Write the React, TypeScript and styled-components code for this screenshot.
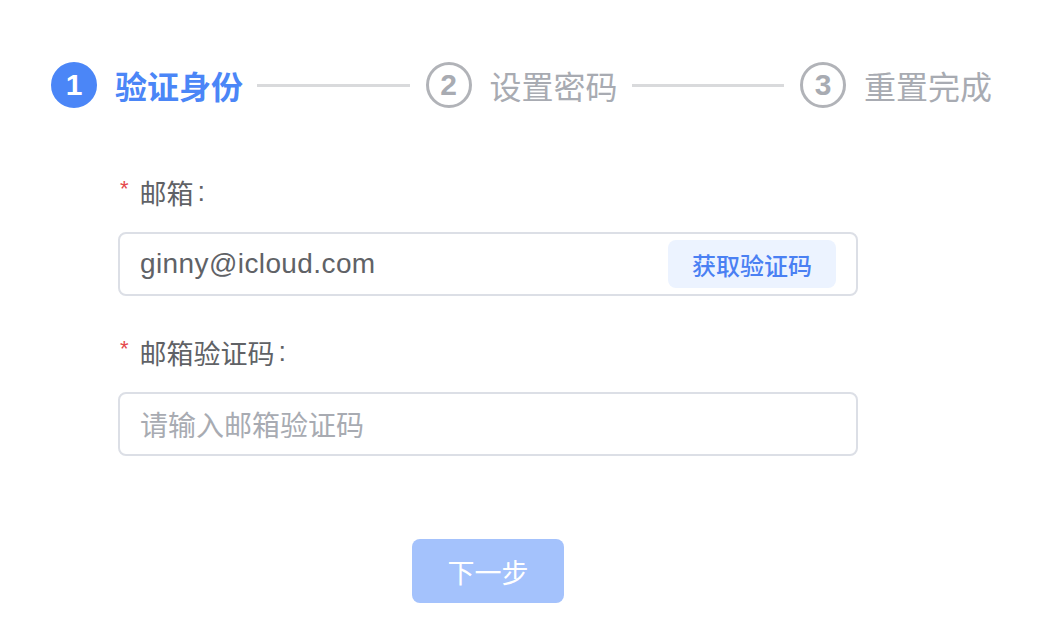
import React from "react";
import styled, { createGlobalStyle } from "styled-components";

const Global = createGlobalStyle`
  html, body { margin: 0; padding: 0; background: #ffffff; }
  body { font-family: "Liberation Sans", "Noto Sans CJK SC", sans-serif; }
  * { box-sizing: border-box; }
`;

const Page = styled.div`
  width: 1048px;
  height: 634px;
  padding-top: 62px;
  background: #ffffff;
`;

const Steps = styled.div`
  display: flex;
  align-items: center;
  width: 941px;
  margin-left: 51px;
`;

const Circle = styled.div<{ $active?: boolean }>`
  flex: none;
  width: 46px;
  height: 46px;
  border-radius: 50%;
  display: flex;
  align-items: center;
  justify-content: center;
  font-family: "Liberation Sans", sans-serif;
  font-weight: 700;
  font-size: 30px;
  line-height: 1;
  color: ${(p) => (p.$active ? "#ffffff" : "#a8abb2")};
  background: ${(p) => (p.$active ? "#4b86f7" : "#ffffff")};
  border: 3px solid ${(p) => (p.$active ? "#4b86f7" : "#b1b3b8")};
`;

const StepTitle = styled.div<{ $active?: boolean }>`
  flex: none;
  margin-left: 18px;
  font-family: "Noto Sans CJK SC", sans-serif;
  font-size: 32px;
  line-height: 46px;
  font-weight: ${(p) => (p.$active ? 700 : 400)};
  color: ${(p) => (p.$active ? "#4b86f7" : "#a8abb2")};
`;

const Line = styled.div`
  flex: 1;
  height: 3px;
  margin: 0 16px 0 14px;
  background: #d9dadc;
`;

const Form = styled.div`
  width: 740px;
  margin-left: 118px;
  margin-top: 64px;
  display: flex;
  flex-direction: column;
`;

const Item = styled.div`
  margin-bottom: 36px;
`;

const Label = styled.div`
  display: flex;
  align-items: center;
  height: 40px;
  margin-bottom: 20px;
  font-family: "Noto Sans CJK SC", sans-serif;
  font-size: 27px;
  color: #606266;
`;

const Star = styled.span`
  color: #e5484d;
  font-family: "Liberation Sans", sans-serif;
  font-size: 22px;
  margin-left: 2px;
  margin-right: 11px;
  position: relative;
  top: -3px;
`;

const Colon = styled.span`
  font-family: "Liberation Sans", sans-serif;
  margin-left: 4px;
`;

const InputBox = styled.div`
  height: 64px;
  border: 2px solid #dcdfe6;
  border-radius: 8px;
  display: flex;
  align-items: center;
  padding: 0 20px;
`;

const Value = styled.div<{ $placeholder?: boolean }>`
  flex: 1;
  font-family: ${(p) =>
    p.$placeholder ? `"Noto Sans CJK SC", sans-serif` : `"Liberation Sans", "Noto Sans CJK SC", sans-serif`};
  font-size: 28px;
  letter-spacing: ${(p) => (p.$placeholder ? "0" : "0.4px")};
  color: ${(p) => (p.$placeholder ? "#a8abb2" : "#606266")};
`;

const CodeButton = styled.div`
  flex: none;
  height: 48px;
  padding: 0 24px;
  border-radius: 8px;
  background: #ecf3ff;
  color: #4a80f3;
  font-family: "Noto Sans CJK SC", sans-serif;
  font-size: 24px;
  font-weight: 500;
  display: flex;
  align-items: center;
`;

const Actions = styled.div`
  display: flex;
  justify-content: center;
  margin-top: 47px;
`;

const NextButton = styled.div`
  width: 152px;
  height: 64px;
  border-radius: 8px;
  background: #a4c2fc;
  color: #ffffff;
  font-family: "Noto Sans CJK SC", sans-serif;
  font-size: 27px;
  display: flex;
  align-items: center;
  justify-content: center;
`;

const steps = ["验证身份", "设置密码", "重置完成"];

export default function App() {
  return (
    <Page>
      <Global />
      <Steps>
        {steps.map((s, i) => (
          <React.Fragment key={s}>
            <Circle $active={i === 0}>{i + 1}</Circle>
            <StepTitle $active={i === 0}>{s}</StepTitle>
            {i < steps.length - 1 && <Line />}
          </React.Fragment>
        ))}
      </Steps>
      <Form>
        <Item>
          <Label>
            <Star>*</Star>邮箱<Colon>:</Colon>
          </Label>
          <InputBox>
            <Value>ginny@icloud.com</Value>
            <CodeButton>获取验证码</CodeButton>
          </InputBox>
        </Item>
        <Item>
          <Label>
            <Star>*</Star>邮箱验证码<Colon>:</Colon>
          </Label>
          <InputBox>
            <Value $placeholder>请输入邮箱验证码</Value>
          </InputBox>
        </Item>
        <Actions>
          <NextButton>下一步</NextButton>
        </Actions>
      </Form>
    </Page>
  );
}
